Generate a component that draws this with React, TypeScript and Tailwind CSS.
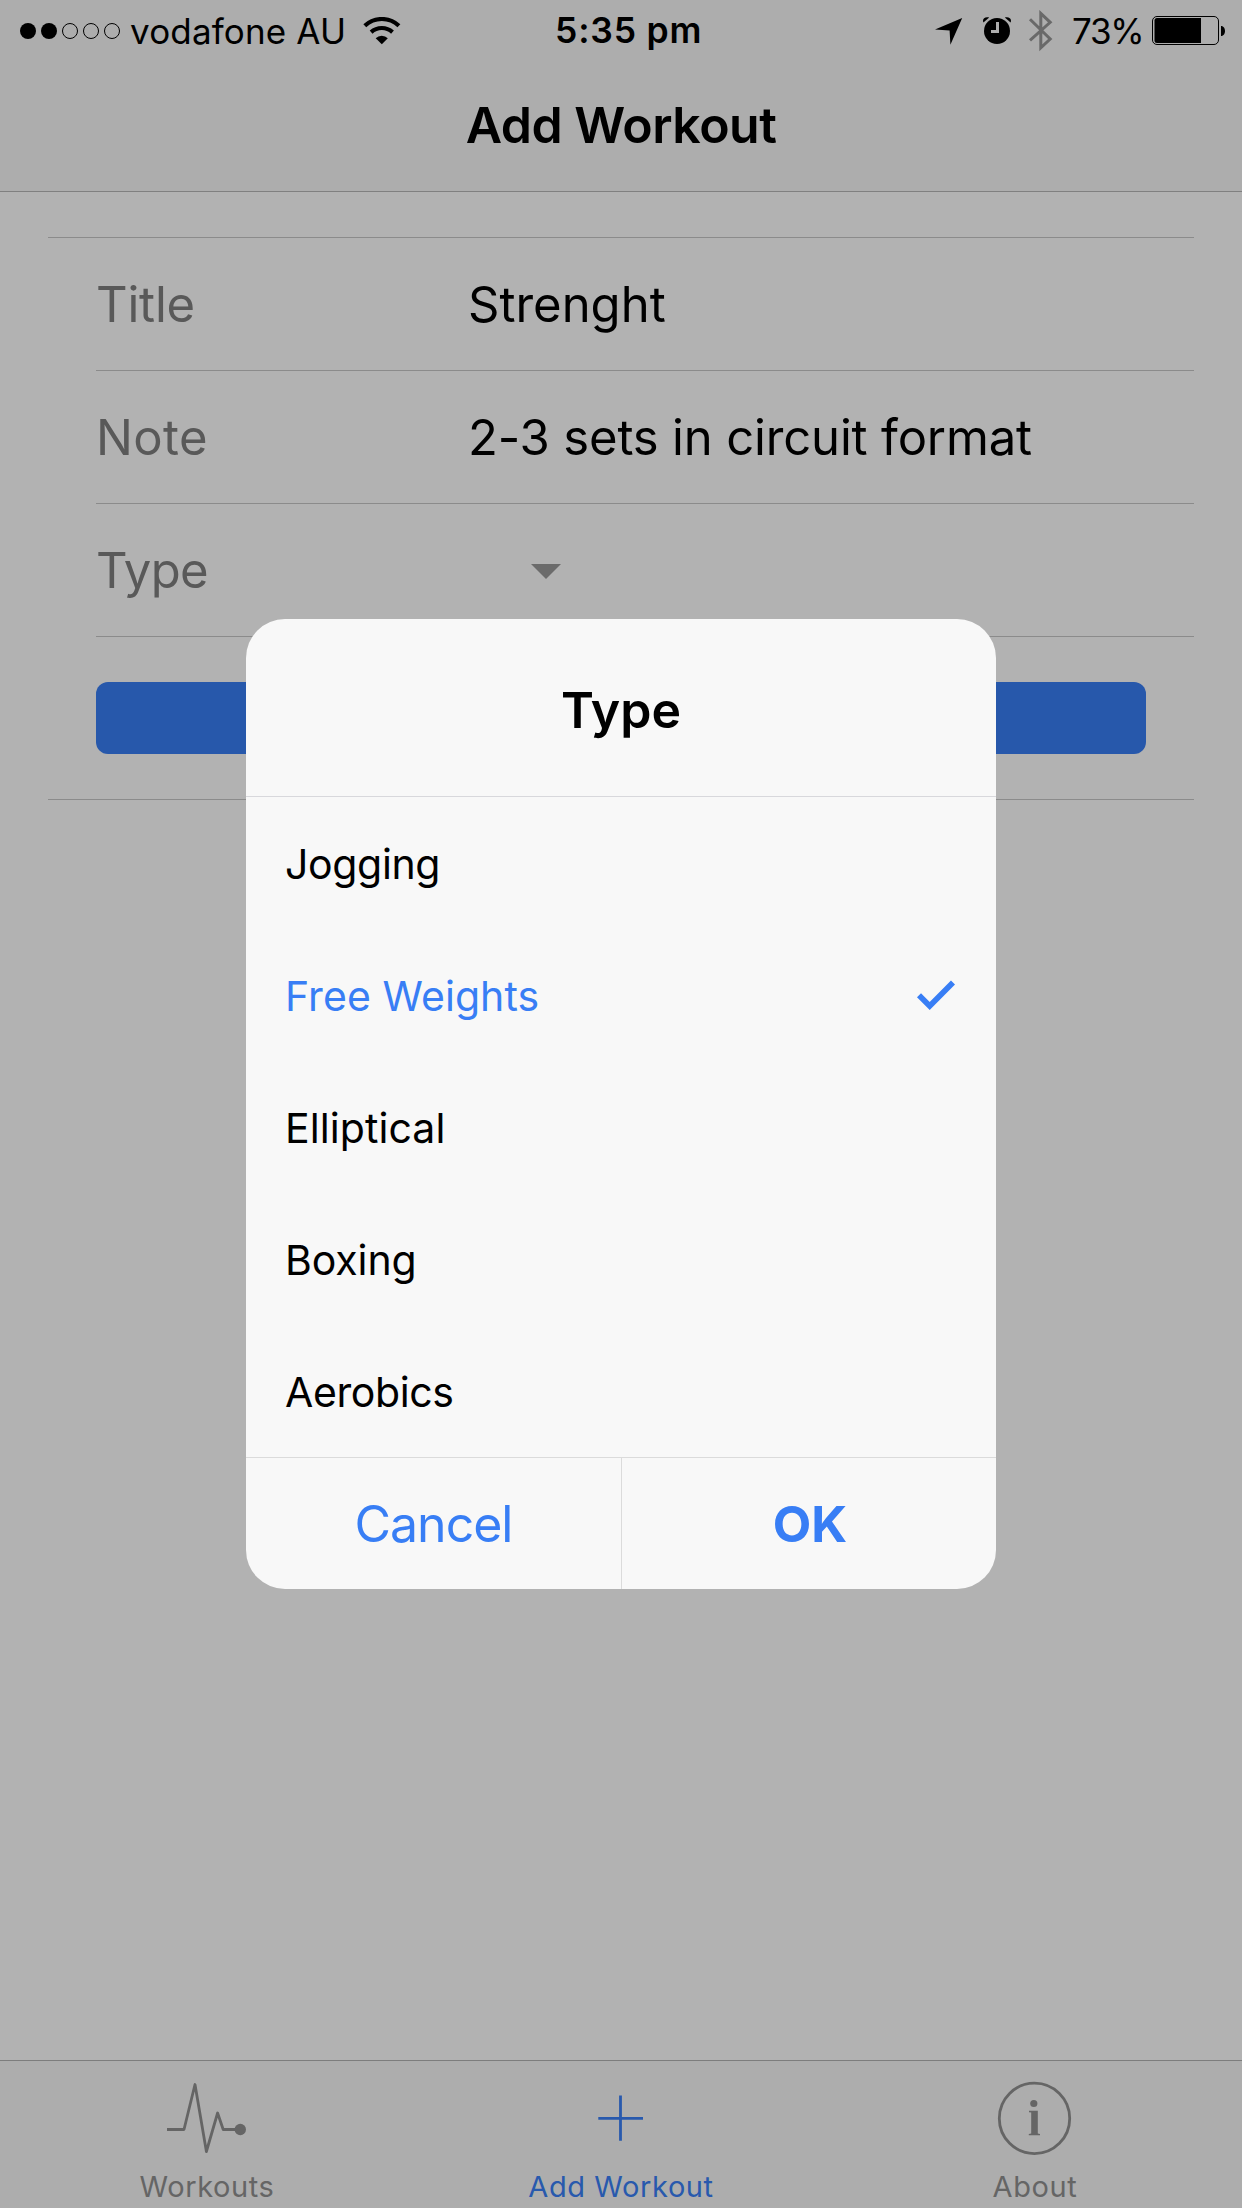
import React from "react";

const WORKOUT_TYPES = [
  { name: "Jogging", spacing: "tracking-[-0.35px]" },
  { name: "Free Weights", spacing: "tracking-[0.08px]", selected: true },
  { name: "Elliptical", spacing: "tracking-[0.08px]" },
  { name: "Boxing", spacing: "tracking-[-0.1px]" },
  { name: "Aerobics", spacing: "tracking-[-0.4px]" },
];

function SignalDots() {
  return (
    <svg className="h-[18px] w-[102px]" viewBox="0 0 102 18">
      <circle cx="9" cy="9" r="8" />
      <circle cx="30" cy="9" r="8" />
      {[51, 72, 93].map((x) => (
        <circle key={x} cx={x} cy="9" r="7.5" fill="none" stroke="#000" strokeWidth="1" />
      ))}
    </svg>
  );
}

function WifiIcon() {
  return (
    <svg className="h-[28px] w-[38px]" viewBox="363 16 38 28">
      <g fill="none" stroke="#000" strokeWidth="4.2">
        <path d="M364.8 24.8A24.8 24.8 0 0 1 398.9 24.8" />
        <path d="M371.1 31.1A16 16 0 0 1 392.5 31.1" />
      </g>
      <path d="M375.7 37.2A8.5 8.5 0 0 1 387.8 37.2L381.8 43.2Z" />
    </svg>
  );
}

function LocationIcon() {
  return (
    <svg className="h-[28px] w-[28px]" viewBox="936 17 28 28">
      <path d="M936 29.4L963.2 18L951.4 44.8L950.6 30.6Z" />
    </svg>
  );
}

function AlarmIcon() {
  return (
    <svg className="h-[28px] w-[30px]" viewBox="982 17 30 28">
      <circle cx="997" cy="31" r="13" />
      <path d="M983.4 22.6C981.9 19 984.9 16.4 989.2 17.6Z" />
      <path d="M1010.6 22.6C1012.1 19 1009.1 16.4 1004.8 17.6Z" />
      <path d="M997.5 22V31.5H991" fill="none" stroke="#adadad" strokeWidth="3" />
    </svg>
  );
}

function BluetoothIcon() {
  return (
    <svg className="h-[42px] w-[26px]" viewBox="1028 10 26 42">
      <path
        d="M1030 19.2L1050.2 39L1040.8 47.8V13.4L1050.2 22.3L1030 40.4"
        fill="none"
        stroke="#696969"
        strokeWidth="3"
      />
    </svg>
  );
}

function BatteryIcon() {
  return (
    <svg className="h-[30px] w-[74px]" viewBox="1152 16 74 30">
      <rect x="1152.5" y="16.5" width="66" height="28" rx="4.5" fill="none" stroke="#000" />
      <path d="M1201 18H1157A2.5 2.5 0 0 0 1154.5 20.5V40.5A2.5 2.5 0 0 0 1157 43H1201Z" />
      <path d="M1221 26C1226.3 26 1226.3 36 1221 36Z" />
    </svg>
  );
}

function StatusBar() {
  return (
    <div className="flex h-[62px] items-center text-[35px] leading-[42px] whitespace-nowrap">
      <div className="flex w-[555px] shrink-0 items-center pl-[19px]">
        <SignalDots />
        <span className="ml-[9px] w-[233px] tracking-[0.16px]">vodafone AU</span>
        <WifiIcon />
      </div>
      <span className="w-[380px] shrink-0 text-[35.5px] font-semibold tracking-[0.8px]">5:35 pm</span>
      <LocationIcon />
      <div className="ml-[19px] flex items-center">
        <AlarmIcon />
      </div>
      <div className="ml-[16px] flex items-center">
        <BluetoothIcon />
      </div>
      <span className="ml-[18px] w-[80px] tracking-[-1.3px]">73%</span>
      <BatteryIcon />
    </div>
  );
}

function FormRow({
  label,
  labelSpacing,
  children,
}: {
  label: string;
  labelSpacing: string;
  children: React.ReactNode;
}) {
  return (
    <div className="ml-12 flex h-[133px] items-center border-b border-[#8b8b8b] text-[49px] leading-none whitespace-nowrap">
      <span className="w-[372px] shrink-0 text-[#595959]">
        <span className={labelSpacing}>{label}</span>
      </span>
      {children}
    </div>
  );
}

function WorkoutForm() {
  return (
    <form className="mx-12 mt-[45px] border-y border-[#8b8b8b]">
      <FormRow label="Title" labelSpacing="tracking-[-0.2px]">
        <span>Strenght</span>
      </FormRow>
      <FormRow label="Note" labelSpacing="tracking-[0.4px]">
        <span className="tracking-[-0.16px]">2-3 sets in circuit format</span>
      </FormRow>
      <FormRow label="Type" labelSpacing="tracking-[-0.7px]">
        <svg className="ml-[63px] mt-[2px] h-[15px] w-[30px]" viewBox="0 0 30 15">
          <path d="M0 0H30L15 15Z" fill="#6b6b6b" />
        </svg>
      </FormRow>
      <div className="py-[45px] pr-12 pl-12">
        <button type="button" aria-label="Save" className="block h-[72px] w-full rounded-[12px] bg-[#2758ab]" />
      </div>
    </form>
  );
}

function TypeDialog() {
  return (
    <div className="absolute top-[619px] left-[246px] flex h-[970px] w-[750px] flex-col overflow-hidden rounded-[39px] bg-[#f8f8f8]">
      <h2 className="flex h-[178px] items-center justify-center border-b border-[#d8d8dc] pt-[5px] text-[50px] leading-none font-semibold">
        Type
      </h2>
      <ul className="text-[41px] leading-none">
        {WORKOUT_TYPES.map(({ name, spacing, selected }) => (
          <li
            key={name}
            className={
              selected
                ? "flex h-[132px] items-center justify-between pr-[40px] pl-[39px] text-[#387ef5]"
                : "flex h-[132px] items-center pl-[39px]"
            }
          >
            <span className={`pt-[3px] ${spacing}`}>{name}</span>
            {selected && (
              <svg className="h-[32px] w-[40px]" viewBox="916 980 40 32">
                <path d="M919 996.2L929.7 1006.9L953 983.6" fill="none" stroke="#387ef5" strokeWidth="5.7" />
              </svg>
            )}
          </li>
        ))}
      </ul>
      <div className="flex flex-1 border-t border-[#dbdbdb] text-[50px] leading-none text-[#387ef5]">
        <button type="button" className="w-[375px] tracking-[-1px]">
          Cancel
        </button>
        <button type="button" className="flex-1 border-l border-[#dbdbdb] pl-[2px] font-bold">
          OK
        </button>
      </div>
    </div>
  );
}

function PulseIcon() {
  return (
    <svg className="h-[80px] w-[80px]" viewBox="167 2079 80 80">
      <path
        d="M167 2129.5H184L195 2084.5L206.4 2151.5L217.6 2113L223.2 2129.5H238"
        fill="none"
        stroke="#656565"
        strokeWidth="2.8"
        strokeLinejoin="round"
      />
      <circle cx="240.3" cy="2129.5" r="5.7" fill="#656565" />
    </svg>
  );
}

function PlusIcon() {
  return (
    <svg className="h-[80px] w-[80px]" viewBox="581 2079 80 80">
      <path d="M598.3 2118.3H643M620.5 2095.5V2140.7" stroke="#2859ad" strokeWidth="2.8" />
    </svg>
  );
}

function InfoIcon() {
  return (
    <svg className="h-[80px] w-[80px]" viewBox="995 2079 80 80">
      <circle cx="1034.5" cy="2118.4" r="35.2" fill="none" stroke="#656565" strokeWidth="2.8" />
      <circle cx="1033.8" cy="2103.5" r="3.6" fill="#656565" />
      <path d="M1029 2110.8H1037.8V2133.6L1040 2134V2135.3H1028.8V2134L1031.2 2133.6V2112.5L1029 2112.2Z" fill="#656565" />
    </svg>
  );
}

function TabBar() {
  return (
    <nav className="mt-auto grid h-[148px] grid-cols-3 border-t border-[#7d7d7d] bg-[#adadad] text-[29px] leading-[36px] tracking-[0.6px] text-[#656565]">
      <div className="flex flex-col items-center pt-[18px]">
        <PulseIcon />
        <span className="mt-[10px]">Workouts</span>
      </div>
      <div className="flex flex-col items-center pt-[18px] text-[#2859ad]">
        <PlusIcon />
        <span className="mt-[10px]">Add Workout</span>
      </div>
      <div className="flex flex-col items-center pt-[18px]">
        <InfoIcon />
        <span className="mt-[10px]">About</span>
      </div>
    </nav>
  );
}

export default function App() {
  return (
    <div className="relative flex h-[2208px] w-[1242px] flex-col overflow-hidden bg-[#b2b2b2] font-['Inter',sans-serif] text-black">
      <header className="h-[192px] border-b border-[#808080] bg-[#adadad]">
        <StatusBar />
        <h1 className="flex h-[126px] items-center justify-center text-[50px] leading-none font-semibold tracking-[-0.5px]">
          Add Workout
        </h1>
      </header>
      <WorkoutForm />
      <TabBar />
      <TypeDialog />
    </div>
  );
}
